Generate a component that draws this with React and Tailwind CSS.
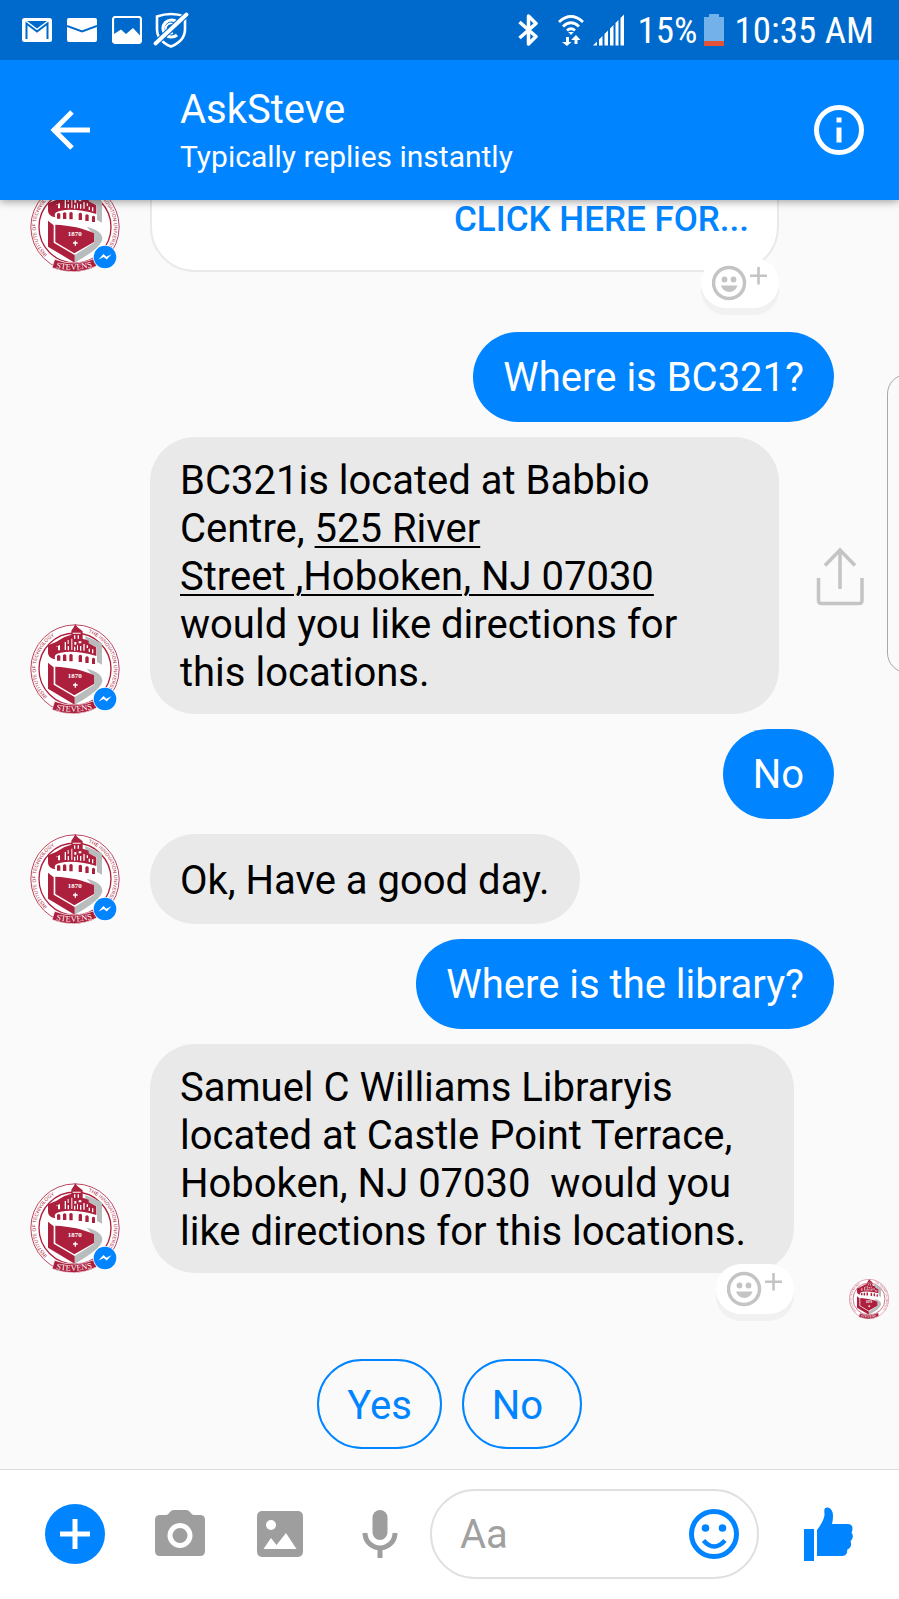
import { useId } from "react";

const RED = "#ac1f3d";

function Seal({ className }) {
  const id = useId();
  return (
    <svg viewBox="30 44 270 270" className={className} role="img" aria-label="Stevens seal">
      <defs>
        <path id={id + "l"} d="M82 262 A116 116 0 0 1 152 64" />
        <path id={id + "r"} d="M205 70 A116 116 0 0 1 170 295" />
        <path id={id + "b"} d="M108 301 Q165 316 240 293" />
      </defs>
      <circle cx="165" cy="179" r="134" fill="#fff" />
      <circle cx="165" cy="179" r="132.5" fill="none" stroke={RED} strokeWidth="2.5" />
      <circle cx="165" cy="179" r="108" fill="none" stroke={RED} strokeWidth="4" />
      <g fill={RED} fontFamily="Liberation Sans, sans-serif" fontSize="15">
        <text><textPath href={"#" + id + "l"}>INSTITUTE OF TECHNOLOGY</textPath></text>
        <text><textPath href={"#" + id + "r"}>THE INNOVATION UNIVERSITY</textPath></text>
      </g>
      <path d="M196 80 L246 102 V166 L231 158 V114 L196 98z" fill="#b9bcbd" />
      <path d="M200 178 Q247 190 247 214 Q246 240 164 286 V263 L222 226 V202z" fill="#b9bcbd" />
      <path d="M84 160 L101 174 V226 L164 263 V286 L84 238z" fill={RED} />
      <path d="M106 172 C150 174 190 182 222 198 V224 L163 258 L106 224z" fill={RED} />
      <path d="M84 108 L108 98 L132 84 L154 76 V64 L162 52 L166 44 L171 52 L188 66 V88 L206 94 V102 L229 114 V140 Q165 122 122 130 Q98 134 106 150 Q84 146 84 130z" fill={RED} />
      <g fill="#fff">
        <path d="M108 112l12-5v16h-6v-12l-6 3zM134 98h4v24h-4zM143 92h3v12h-3zM143 110h4v13h-4zM154 88h3v34h-3zM163 98h6v8h-6zM162 112h4v12h-4zM176 96h8v6h-8zM171 108h3v15h-3zM180 110h4v14h-4zM190 104h4v20h-4zM200 108h4v8h-4zM206 118h4v10h-4zM216 120h4v12h-4z" />
        <path d="M158 70h24v3h-24zM162 78h4v10h-4zM173 78h4v10h-4z" />
      </g>
      <path d="M111 140q5-6 10 0v14h-10zM129 138q5-6 10 0v17h-10zM148 137q5-6 10 0v19h-10zM176 139q5-6 10 0v19h-10zM196 144q5-6 10 0v17h-10zM216 148q4-6 9 0v16h-9z" fill={RED} />
      <text x="164" y="206" textAnchor="middle" fill="#fff" fontSize="21" fontWeight="700" fontFamily="Liberation Serif, serif">1870</text>
      <path d="M161 225h3v-5h4v5h5v4h-5v6h-4v-6h-5v-4z" fill="#fff" />
      <path d="M104 276 Q165 300 228 272 L230 296 Q165 328 96 301z" fill={RED} stroke="#fff" strokeWidth="2" />
      <text fill="#fff" fontSize="25" fontFamily="Liberation Serif, serif"><textPath href={"#" + id + "b"}>STEVENS</textPath></text>
    </svg>
  );
}

function Avatar() {
  return (
    <div className="relative h-[90px] w-[90px] shrink-0">
      <Seal className="h-full w-full" />
      <svg viewBox="0 0 24 24" className="absolute right-[3px] bottom-[3px] h-6 w-6" aria-hidden="true">
        <circle cx="12" cy="12" r="12" fill="#fff" />
        <circle cx="12" cy="12" r="11.300" fill="#0084ff" />
        <path d="M5.500 14.500 L10.500 9 L13.300 11.700 L18.500 9.200 L13.700 14.600 L10.800 12z" fill="#fff" />
      </svg>
    </div>
  );
}

function ReactionButton({ className }) {
  return (
    <button
      aria-label="Add reaction"
      className={"absolute right-0 flex h-[50px] w-[78px] items-center justify-center rounded-full bg-white shadow-[0_7px_0_#f1f1f1] " + className}
    >
      <svg viewBox="0 0 56 36" className="h-9 w-14" aria-hidden="true">
        <circle cx="17" cy="18" r="15.500" fill="none" stroke="#c4c4c4" strokeWidth="3.500" />
        <circle cx="12.500" cy="14.500" r="2.900" fill="#c4c4c4" />
        <circle cx="21.500" cy="14.500" r="2.900" fill="#c4c4c4" />
        <path d="M9 20.500h16.500q-2 6.500-8.200 6.500t-8.300-6.500z" fill="#c4c4c4" />
        <path d="M46.500 2v17.500M38 10.700h17" stroke="#c4c4c4" strokeWidth="2.600" />
      </svg>
    </button>
  );
}

function Sent({ children }) {
  return (
    <div className="flex justify-end pr-[65px]">
      <p className="flex min-h-[90px] items-center rounded-[45px] bg-[#0084ff] px-[30px] text-white">{children}</p>
    </div>
  );
}

function Received({ children, width, extra, action }) {
  return (
    <div className="flex items-end gap-[30px] pl-[30px]">
      <Avatar />
      <div className={"relative " + width}>
        <div className="flex min-h-[90px] items-center rounded-[45px] bg-[#e9e9e9] px-[30px] pt-5 pb-[17px] leading-[48px] text-black">
          <p>{children}</p>
        </div>
        {extra}
      </div>
      {action}
    </div>
  );
}

function StatusBar() {
  return (
    <div className="flex h-[60px] items-center justify-between bg-[#006acc] pr-[25px] pl-[22px] text-white">
      <div className="flex items-center gap-[15px]">
        <svg viewBox="0 0 30 24" className="h-6 w-[30px]" aria-hidden="true">
          <rect width="30" height="24" rx="2.500" fill="#fff" />
          <path d="M4.500 21V5.500L15 13.500L25.500 5.500V21" fill="none" stroke="#006acc" strokeWidth="2" />
          <path d="M5 3h20l-10 7.500z" fill="#006acc" />
        </svg>
        <svg viewBox="0 0 30 24" className="h-6 w-[30px]" aria-hidden="true">
          <rect width="30" height="24" rx="2" fill="#fff" />
          <path d="M0 8L15 13.500L30 8" fill="none" stroke="#006acc" strokeWidth="2" />
        </svg>
        <svg viewBox="0 0 30 28" className="h-7 w-[30px]" aria-hidden="true">
          <rect x="1" y="1" width="28" height="26" rx="2.500" fill="none" stroke="#fff" strokeWidth="2.200" />
          <path d="M2 18L9 13.500L14 18L21 12L28 19.500V26H2z" fill="#fff" />
        </svg>
        <svg viewBox="0 0 36 36" className="-ml-1 h-9 w-9" fill="none" stroke="#fff" aria-hidden="true">
          <path d="M4 4.500Q18 -.500 32 4.500V17Q32 29 18 34.500Q4 29 4 17z" strokeWidth="2.600" />
          <path d="M24 10A8.500 8.500 0 1 0 24 23" strokeWidth="3.200" />
          <path d="M20 12a5 5 0 1 0 0 9" strokeWidth="1.800" />
          <path d="M3 31L33 3" stroke="#006acc" strokeWidth="6" />
          <path d="M2.500 31.500L33.500 2.500" strokeWidth="3.800" strokeLinecap="round" />
        </svg>
      </div>
      <div className="flex items-center font-['Roboto_Condensed','Roboto',sans-serif] text-[37px]">
        <svg viewBox="0 0 20 32" className="mr-[19px] h-8 w-5" fill="none" stroke="#fff" strokeWidth="3.500" strokeLinejoin="round" aria-hidden="true">
          <path d="M1.500 8L18 22.500L10.500 30V2L18 9.500L1.500 24" />
        </svg>
        <svg viewBox="0 0 28 32" className="h-8 w-7" fill="none" stroke="#fff" strokeWidth="2.800" aria-hidden="true">
          <path d="M2 8Q14-3 26 8M6 12.500Q14 5 22 12.500M10 16.500Q14 13 18 16.500" />
          <path d="M14 21l-2.800-3h5.600z" fill="#fff" stroke="none" />
          <path d="M9 23v5H5l5 4 4.500-4H12v-5zM17.500 30v-4H14l5-5 4.500 5H20.500v4z" fill="#fff" stroke="none" />
        </svg>
        <svg viewBox="0 0 32 32" className="ml-2 h-8 w-8" aria-hidden="true">
          <path d="M0 31.500L4 27.500V31.500zM6 31.500V25.500L9.500 22V31.500zM11.500 31.500V20L15 16.500V31.500zM17 31.500V14.500L20.500 11V31.500zM22.500 31.500V9L25.500 6V31.500zM27.500 31.500V4L31 .500V31.500z" fill="#fff" />
        </svg>
        <span className="ml-[13px]">15%</span>
        <svg viewBox="0 0 20 32" className="ml-[6px] h-8 w-5" aria-hidden="true">
          <path d="M0 3h5V0h10v3h5v29H0z" fill="#73b1ea" />
          <path d="M0 27h20v5H0z" fill="#e2533a" />
        </svg>
        <span className="ml-[11px]">10:35 AM</span>
      </div>
    </div>
  );
}

export default function App() {
  return (
    <div className="relative flex min-h-screen flex-col overflow-hidden bg-[#fafafa] font-['Roboto',sans-serif] text-[40px] leading-[47px]">
      <div className="relative z-10 shadow-[0_2px_8px_rgba(0,0,0,0.35)]">
        <StatusBar />
        <header className="flex h-[140px] items-center bg-[#0084ff] pr-[35px] pl-[50px] text-white">
          <button aria-label="Back" className="w-[130px]">
            <svg viewBox="0 0 40 40" className="h-10 w-10" fill="none" stroke="#fff" strokeWidth="5" aria-hidden="true">
              <path d="M40 20H4M22 2L4 20L22 38" />
            </svg>
          </button>
          <div className="flex-1 pt-1">
            <h1 className="text-[40px] leading-[50px]">AskSteve</h1>
            <p className="text-[30px] leading-[44px]">Typically replies instantly</p>
          </div>
          <button aria-label="Conversation info">
            <svg viewBox="0 0 50 50" className="h-[50px] w-[50px]" aria-hidden="true">
              <circle cx="25" cy="25" r="22.500" fill="none" stroke="#fff" strokeWidth="5" />
              <path d="M22.500 12.500h5v5h-5zM22.500 22.500h5v15h-5z" fill="#fff" />
            </svg>
          </button>
        </header>
      </div>

      <main className="flex flex-1 flex-col gap-[15px]">
        <div className="mb-[45px] flex h-[72px] items-end gap-[30px] pl-[30px]">
          <Avatar />
          <div className="relative w-[629px]">
            <div className="flex h-[120px] items-end justify-end rounded-[45px] border-2 border-[#e9e9e9] bg-white px-[28px] pb-[29px]">
              <a href="#more" className="text-[35px] leading-[42px] font-medium text-[#0084ff]">CLICK HERE FOR...</a>
            </div>
            <ReactionButton className="-bottom-9" />
          </div>
        </div>

        <Sent>Where is BC321?</Sent>
        <Received
          width="w-[629px]"
          action={
            <button aria-label="Share" className="mb-[108px] ml-[7px]">
              <svg viewBox="0 0 48 60" className="h-[60px] w-12" fill="none" stroke="#c4c4c4" strokeWidth="3.500" aria-hidden="true">
                <path d="M24 43V4M9 19.500L24 4L39 19.500" />
                <path d="M2.500 32V54.500Q2.500 57.500 5.500 57.500H43Q46 57.500 46 54.500V32" />
              </svg>
            </button>
          }
        >
          BC321is located at Babbio Centre,{" "}
          <a href="#map" className="underline decoration-2 underline-offset-4">525 River<br />Street ,Hoboken, NJ 07030</a>{" "}
          would you like directions for this locations.
        </Received>
        <Sent>No</Sent>
        <Received width="">Ok, Have a good day.</Received>
        <Sent>Where is the library?</Sent>
        <Received width="w-[644px]" extra={<ReactionButton className="-bottom-[41px]" />}>
          Samuel C Williams Libraryis located at Castle Point Terrace, Hoboken, NJ 07030&nbsp; would you like directions for this locations.
        </Received>

        <div className="-mt-[9px] flex justify-end pr-[10px]">
          <Seal className="h-10 w-10" />
        </div>
        <div className="mt-[25px] mb-5 flex justify-center gap-5 text-[#0084ff]">
          <button className="h-[90px] min-w-[120px] rounded-full border-2 border-[#0084ff] px-7 pt-0.5 text-left">Yes</button>
          <button className="h-[90px] min-w-[120px] rounded-full border-2 border-[#0084ff] px-7 pt-0.5 text-left">No</button>
        </div>
      </main>

      <div className="absolute top-[374px] -right-8 h-[299px] w-11 rounded-[20px] border border-[#a8a8a8]" />

      <footer className="flex h-[130px] items-center border-t border-[#dcdcdc] bg-white pr-[46px] pb-0.5 pl-[45px]">
        <button aria-label="More" className="flex h-[60px] w-[60px] items-center justify-center rounded-full bg-[#0084ff]">
          <svg viewBox="0 0 30 30" className="h-[30px] w-[30px]" stroke="#fff" strokeWidth="5" aria-hidden="true">
            <path d="M15 0V30M0 15H30" />
          </svg>
        </button>
        <button aria-label="Camera" className="ml-[50px]">
          <svg viewBox="0 0 50 50" className="h-[50px] w-[50px]" aria-hidden="true">
            <path d="M5 6H11Q13 6 14.500 3.500Q16 1 18.500 1H31.500Q34 1 35.500 3.500Q37 6 39 6H45Q50 6 50 11V42Q50 47 45 47H5Q0 47 0 42V11Q0 6 5 6z" fill="#9e9e9e" />
            <circle cx="25" cy="26.500" r="10" fill="none" stroke="#fff" strokeWidth="5" />
          </svg>
        </button>
        <button aria-label="Photos" className="ml-[52px]">
          <svg viewBox="0 0 46 46" className="h-[46px] w-[46px]" aria-hidden="true">
            <rect width="46" height="46" rx="5" fill="#9e9e9e" />
            <circle cx="14" cy="14" r="5" fill="#fff" />
            <path d="M6.500 38L14 27L19.500 34L29 22L39.500 38z" fill="#fff" />
          </svg>
        </button>
        <button aria-label="Voice" className="ml-[59px]">
          <svg viewBox="0 0 36 48" className="h-12 w-9" aria-hidden="true">
            <rect x="10.500" y="0" width="15" height="30" rx="7.500" fill="#9e9e9e" />
            <path d="M3 23A15 15 0 0 0 33 23" fill="none" stroke="#9e9e9e" strokeWidth="5" />
            <path d="M15.500 38h5v10h-5z" fill="#9e9e9e" />
          </svg>
        </button>
        <div className="ml-8 flex h-[90px] min-w-0 flex-1 items-center rounded-full border-2 border-[#e0e0e0] pr-[18px] pl-[28px]">
          <input aria-label="Message" placeholder="Aa" className="min-w-0 flex-1 bg-transparent pt-0.5 outline-none placeholder:text-[#a0a0a0]" />
          <button aria-label="Emoji">
            <svg viewBox="0 0 50 50" className="h-[50px] w-[50px]" aria-hidden="true">
              <circle cx="25" cy="25" r="22.500" fill="none" stroke="#0084ff" strokeWidth="5" />
              <circle cx="16.500" cy="19" r="3.800" fill="#0084ff" />
              <circle cx="33.500" cy="19" r="3.800" fill="#0084ff" />
              <path d="M14.500 31.500Q25 43.500 36 31.500" fill="none" stroke="#0084ff" strokeWidth="4.500" />
            </svg>
          </button>
        </div>
        <button aria-label="Like" className="ml-[45px]">
          <svg viewBox="0 0 49 54" className="h-[54px] w-[49px]" fill="#0084ff" aria-hidden="true">
            <path d="M0 22H10V54H0z" />
            <path d="M13 49V23C17 18 20 12 20.500 8L20.300 3Q20.500 0 24 .500Q29 2 29 9Q29 13 28 17H44Q48 17 48.500 21Q48.500 24 47.500 25.500Q49.500 28 48.500 31Q48 33 46.500 34Q48 38 46 40.500Q45 42 43.300 42.500Q43.500 49 37.500 49z" />
          </svg>
        </button>
      </footer>
    </div>
  );
}
